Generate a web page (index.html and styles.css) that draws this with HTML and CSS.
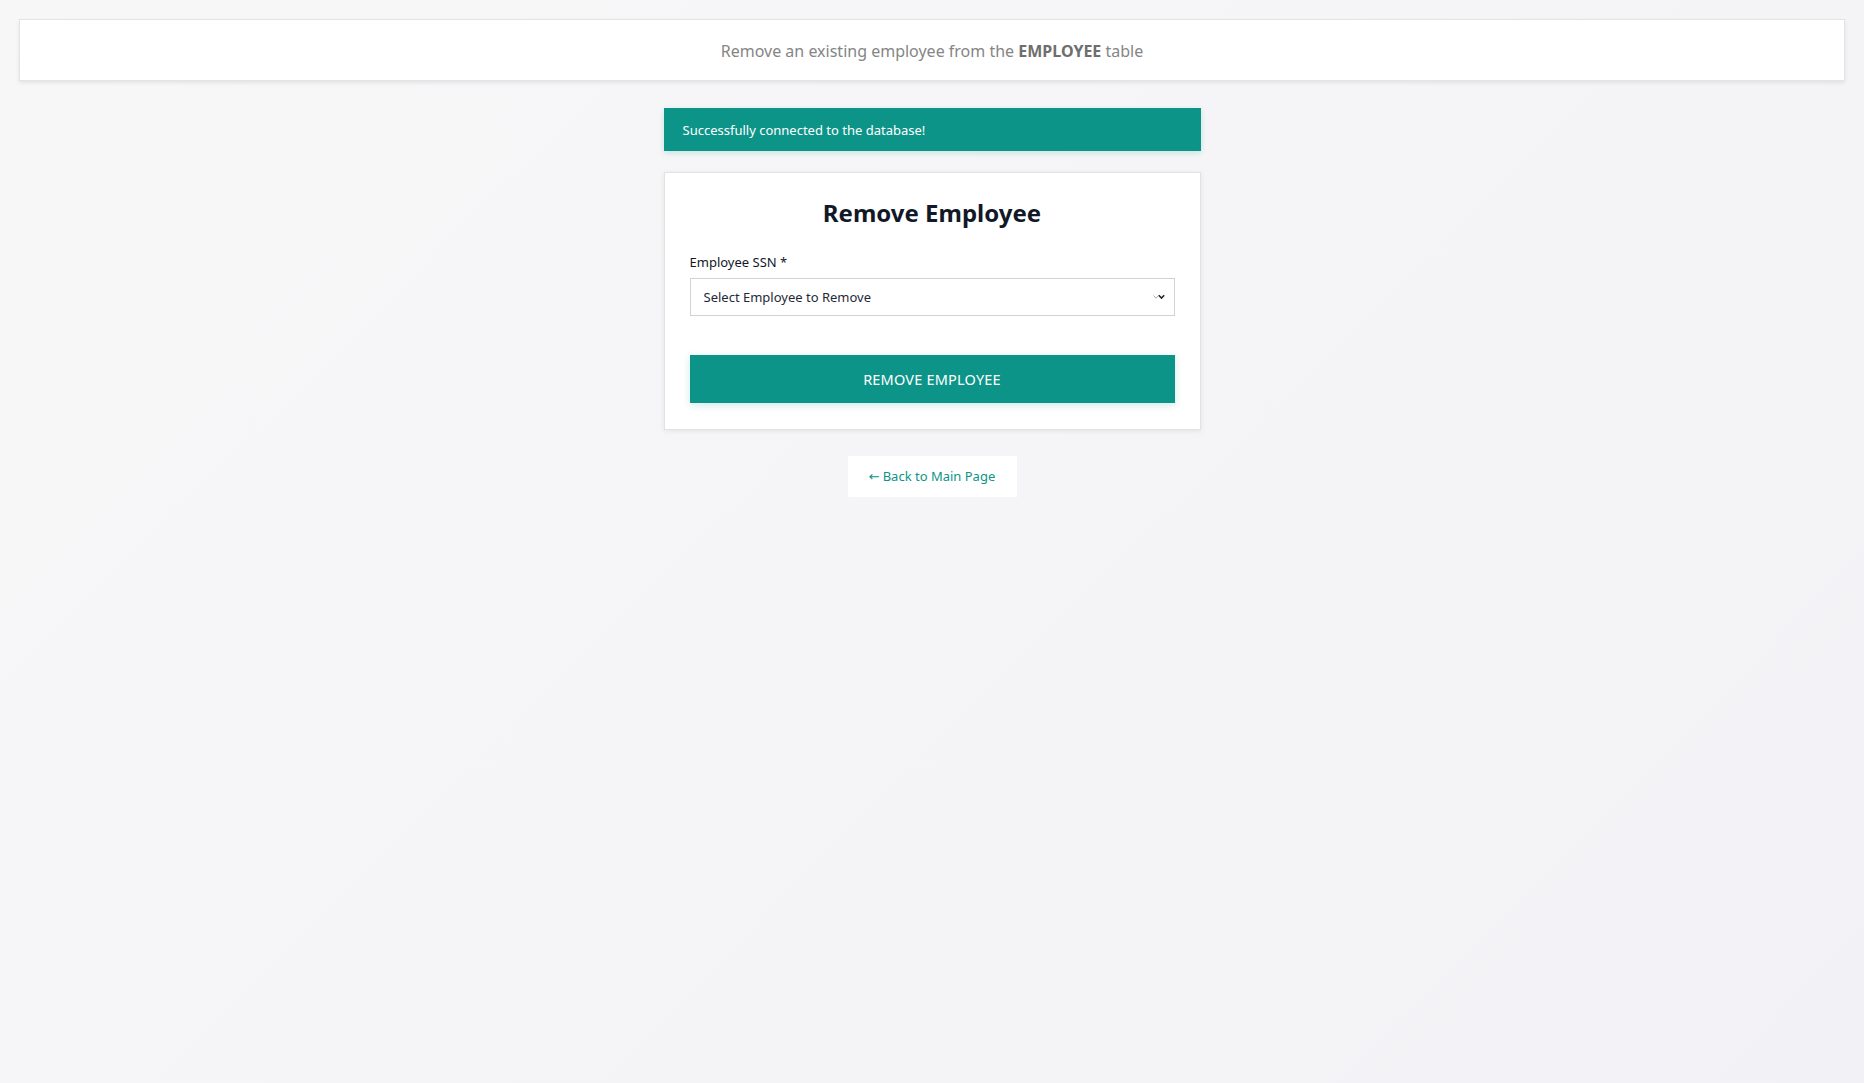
FILE: index.html
```html
<!DOCTYPE html>
<html lang="en">
<head>
<meta charset="utf-8">
<title>Remove Employee</title>
<link rel="stylesheet" href="styles.css">
</head>
<body>
<div class="page">
  <header class="header">
    <p class="header-text">Remove an existing employee from the <strong>EMPLOYEE</strong> table</p>
  </header>
  <main class="main">
    <div class="alert">Successfully connected to the database!</div>
    <section class="card">
      <h1 class="title">Remove Employee</h1>
      <form class="form">
        <label class="label" for="ssn">Employee SSN *</label>
        <div class="select-wrap">
          <select class="select" id="ssn">
            <option>Select Employee to Remove</option>
          </select>
          <svg class="chev chev-light" width="6" height="4" viewBox="0 0 6 4"><path d="M0.5 0.5 L3 3.2 L5.5 0.5" fill="none" stroke="#a9a9ae" stroke-width="1"/></svg>
          <svg class="chev chev-dark" width="7" height="5" viewBox="0 0 7 5"><path d="M0.8 0.8 L3.5 3.6 L6.2 0.8" fill="none" stroke="#222" stroke-width="1.5"/></svg>
        </div>
        <button type="button" class="button">REMOVE EMPLOYEE</button>
      </form>
    </section>
    <a class="back" href="#"><span class="arrow">&larr;</span> Back to Main Page</a>
  </main>
</div>
</body>
</html>
```

FILE: styles.css
```css
html, body {
  margin: 0;
  padding: 0;
}

body {
  min-height: 100vh;
  background: linear-gradient(135deg, #f7f7f8 0%, #f5f5f7 50%, #f2f2f6 100%);
  font-family: "Noto Sans", "Open Sans", sans-serif;
  color: #111827;
}

.page {
  padding: 19px;
}

.header {
  box-sizing: border-box;
  height: 62px;
  padding-top: 2px;
  background: #ffffff;
  border: 1px solid #e4e4e6;
  box-shadow: 0 2px 4px rgba(0, 0, 0, 0.08);
  display: flex;
  align-items: center;
  justify-content: center;
}

.header-text {
  margin: 0;
  font-size: 16px;
  color: #858585;
}

.header-text strong {
  font-weight: 700;
  color: #6e6e6e;
}

.main {
  display: flex;
  flex-direction: column;
  align-items: center;
  margin-top: 27px;
}

.alert {
  box-sizing: border-box;
  width: 537px;
  height: 43px;
  padding: 0 19px;
  display: flex;
  align-items: center;
  background: #0d9488;
  color: #ffffff;
  font-size: 13px;
  box-shadow: 0 2px 6px rgba(13, 148, 136, 0.2);
}

.card {
  box-sizing: border-box;
  width: 537px;
  margin-top: 21px;
  background: #ffffff;
  border: 1px solid #e2e2e4;
  box-shadow: 0 1px 5px rgba(0, 0, 0, 0.08);
  padding: 25px 25px 26px;
}

.title {
  margin: 0;
  text-align: center;
  font-size: 24px;
  line-height: 30px;
  font-weight: 700;
  color: #111827;
}

.form {
  display: flex;
  flex-direction: column;
  margin-top: 24px;
}

.label {
  font-size: 13px;
  line-height: 20px;
  font-weight: 400;
  color: #111827;
  margin-bottom: 6px;
}

.select-wrap {
  position: relative;
}

.select {
  box-sizing: border-box;
  width: 100%;
  height: 38px;
  margin: 0;
  padding: 0 13px;
  border: 1px solid #d2d2d6;
  border-radius: 0;
  background: #ffffff;
  font-family: "Noto Sans", "Open Sans", sans-serif;
  font-size: 13px;
  color: #1f2937;
  -webkit-appearance: none;
  appearance: none;
}

.chev {
  position: absolute;
  top: 50%;
  transform: translateY(-50%);
  pointer-events: none;
}

.chev-light {
  right: 16px;
}

.chev-dark {
  right: 10px;
}

.button {
  box-sizing: border-box;
  margin-top: 39px;
  height: 48px;
  width: 100%;
  border: none;
  background: #0d9488;
  color: #ffffff;
  font-family: "Noto Sans", "Open Sans", sans-serif;
  font-size: 14.5px;
  letter-spacing: 0.2px;
  box-shadow: 0 2px 8px rgba(13, 148, 136, 0.2);
  cursor: pointer;
}

.back {
  box-sizing: border-box;
  margin-top: 26px;
  width: 169px;
  height: 41px;
  padding-bottom: 1px;
  display: flex;
  align-items: center;
  justify-content: center;
  gap: 3px;
  background: #ffffff;
  color: #0d9488;
  font-size: 13px;
  text-decoration: none;
}

.arrow {
  font-family: "DejaVu Sans", sans-serif;
  font-size: 13px;
}
```
